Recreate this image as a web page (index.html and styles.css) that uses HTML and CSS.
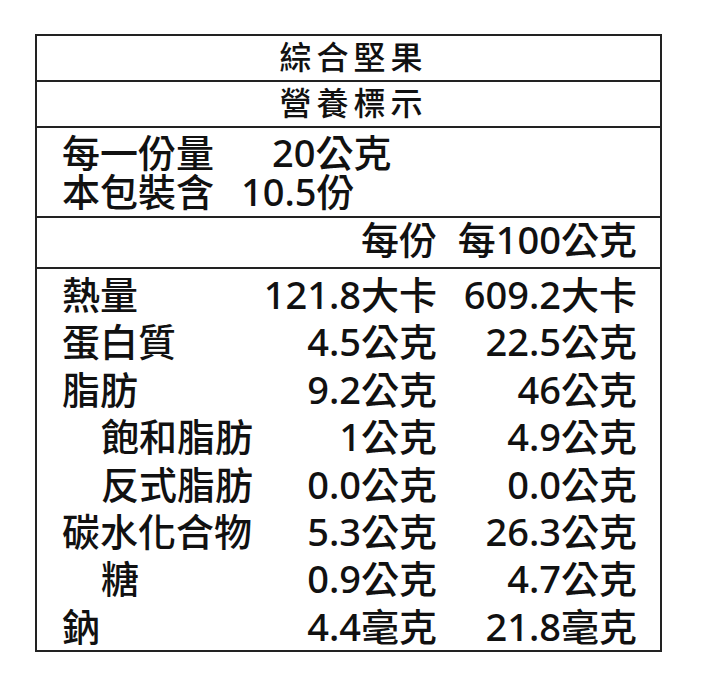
FILE: index.html
```html
<!DOCTYPE html>
<html lang="zh-Hant">
<head>
<meta charset="utf-8">
<title>綜合堅果 營養標示</title>
<link rel="stylesheet" href="styles.css">
</head>
<body>
<div class="label">
  <div class="title-row">綜合堅果</div>
  <div class="title-row">營養標示</div>
  <div class="serving">
    <div class="serving-line"><span class="serving-name">每一份量</span><span class="serving-val first">20公克</span></div>
    <div class="serving-line"><span class="serving-name">本包裝含</span><span class="serving-val">10.5份</span></div>
  </div>
  <div class="grid header">
    <span></span><span class="num">每份</span><span class="num">每100公克</span>
  </div>
  <div class="grid body">
    <span>熱量</span><span class="num">121.8大卡</span><span class="num">609.2大卡</span>
    <span>蛋白質</span><span class="num">4.5公克</span><span class="num">22.5公克</span>
    <span>脂肪</span><span class="num">9.2公克</span><span class="num">46公克</span>
    <span class="sub">飽和脂肪</span><span class="num">1公克</span><span class="num">4.9公克</span>
    <span class="sub">反式脂肪</span><span class="num">0.0公克</span><span class="num">0.0公克</span>
    <span>碳水化合物</span><span class="num">5.3公克</span><span class="num">26.3公克</span>
    <span class="sub">糖</span><span class="num">0.9公克</span><span class="num">4.7公克</span>
    <span>鈉</span><span class="num">4.4毫克</span><span class="num">21.8毫克</span>
  </div>
</div>
</body>
</html>
```

FILE: styles.css
```css
html, body {
  margin: 0;
  padding: 0;
  background: #ffffff;
}

body {
  font-family: "Noto Sans", "Noto Sans CJK TC", sans-serif;
  font-weight: 500;
  color: #111;
}

.label {
  margin: 34px 0 0 35px;
  width: 627px;
  height: 618px;
  box-sizing: border-box;
  border: 2px solid #222;
  display: flex;
  flex-direction: column;
}

.title-row {
  height: 46px;
  box-sizing: border-box;
  border-bottom: 2px solid #222;
  display: flex;
  align-items: center;
  justify-content: center;
  font-size: 32px;
  letter-spacing: 5px;
  padding-left: 10px;
  padding-bottom: 2px;
  line-height: 1;
}

.serving {
  height: 90px;
  box-sizing: border-box;
  border-bottom: 2px solid #222;
  padding: 5px 0 0 25px;
  font-size: 38px;
  line-height: 39px;
}

.serving-line {
  display: flex;
  white-space: nowrap;
}

.serving-name {
  width: 179px;
}

.serving-val.first {
  padding-left: 31px;
}

.grid {
  display: grid;
  grid-template-columns: minmax(0, 1fr) 190px 200px;
  padding: 0 23px 0 25px;
  font-size: 38px;
  white-space: nowrap;
}

.header {
  height: 51px;
  box-sizing: border-box;
  border-bottom: 2px solid #222;
  line-height: 43px;
}

.body {
  flex: 1;
  padding-top: 2px;
  line-height: 46.4px;
}

.num {
  text-align: right;
}

.sub {
  padding-left: 39px;
}
```
